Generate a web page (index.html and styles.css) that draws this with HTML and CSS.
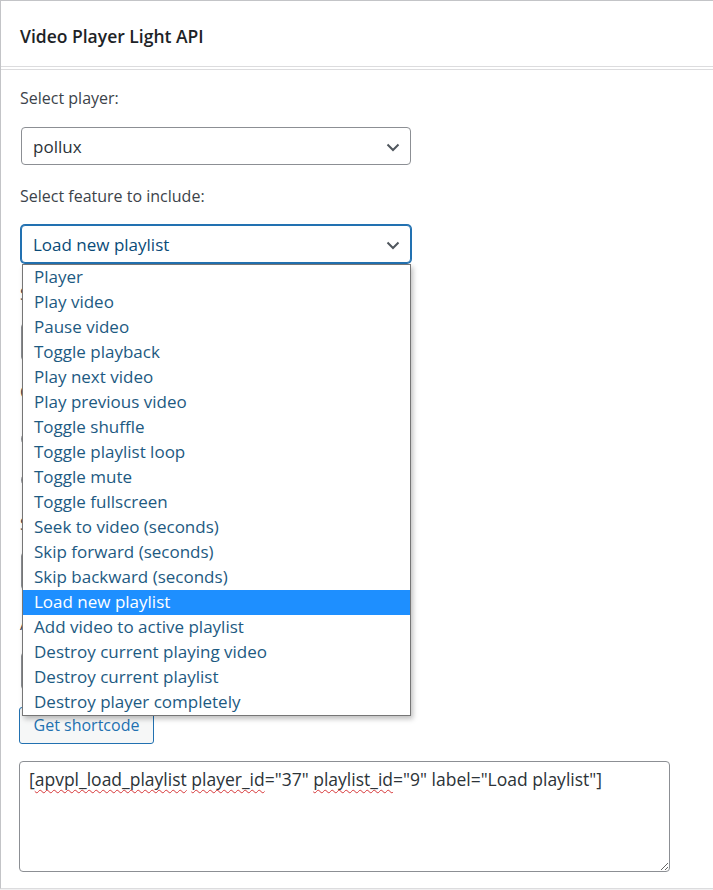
FILE: index.html
```html
<!DOCTYPE html>
<html>
<head>
<meta charset="utf-8">
<link rel="stylesheet" href="styles.css">
</head>
<body>
<div class="postbox">
  <div class="postbox-header"><h2 class="title">Video Player Light API</h2></div>
  <div class="inside">
    <label class="lbl lbl-first">Select player:</label>
    <div class="select">
      <span class="select-text">pollux</span>
      <svg class="chev" width="14" height="9" viewBox="0 0 14 9"><path d="M1.5 1.5 L7 7 L12.5 1.5" fill="none" stroke="#50575e" stroke-width="2"/></svg>
    </div>
    <label class="lbl">Select feature to include:</label>
    <div class="select select-focus">
      <span class="select-text">Load new playlist</span>
      <svg class="chev" width="14" height="9" viewBox="0 0 14 9"><path d="M1.5 1.5 L7 7 L12.5 1.5" fill="none" stroke="#50575e" stroke-width="2"/></svg>
      <ul class="dropdown">
        <li>Player</li>
        <li>Play video</li>
        <li>Pause video</li>
        <li>Toggle playback</li>
        <li>Play next video</li>
        <li>Play previous video</li>
        <li>Toggle shuffle</li>
        <li>Toggle playlist loop</li>
        <li>Toggle mute</li>
        <li>Toggle fullscreen</li>
        <li>Seek to video (seconds)</li>
        <li>Skip forward (seconds)</li>
        <li>Skip backward (seconds)</li>
        <li class="active">Load new playlist</li>
        <li>Add video to active playlist</li>
        <li>Destroy current playing video</li>
        <li>Destroy current playlist</li>
        <li>Destroy player completely</li>
      </ul>
    </div>
    <label class="lbl">Select playlist:</label>
    <div class="select"><span class="select-text">Playlist</span></div>
    <label class="lbl">Choose display type:</label>
    <div class="radios">
      <div class="radio-row"><span class="radio"></span><span class="radio-text">Button</span></div>
      <div class="radio-row"><span class="radio"></span><span class="radio-text">Link</span></div>
    </div>
    <label class="lbl lbl-radio">Set label:</label>
    <div class="input"></div>
    <label class="lbl lbl-wide">Add class name:</label>
    <div class="input"></div>
    <button class="button">Get shortcode</button>
    <div class="textarea">[<span class="wavy">apvpl_load_playlist</span> <span class="wavy">player_id</span>="37" <span class="wavy">playlist_id</span>="9" label="Load playlist"]</div>
  </div>
</div>
</body>
</html>
```
FILE: styles.css
```css
* { box-sizing: border-box; }
html, body { margin: 0; padding: 0; }
body {
  background: #f0f0f1;
  font-family: "Open Sans", "Noto Sans", sans-serif;
  width: 713px;
  height: 890px;
  overflow: hidden;
}
.postbox {
  background: #fff;
  border-left: 1px solid #c3c4c7;
  border-top: 1px solid #c3c4c7;
  border-bottom: 1px solid #dcdcde;
  width: 720px;
  height: 889px;
}
.postbox-header {
  height: 66px;
  border-bottom: 1px solid #dcdcde;
  display: flex;
  align-items: center;
  padding-left: 19px;
}
.title {
  margin: 0;
  font-size: 17.5px;
  font-weight: 600;
  color: #1d2327;
  padding-top: 4px;
}
.inside {
  margin-top: 2px;
  border-top: 1px solid #dcdcde;
  padding: 18px 0 0 19px;
  display: flex;
  flex-direction: column;
  align-items: flex-start;
}
.lbl {
  display: block;
  height: 20px;
  line-height: 20px;
  font-size: 16px;
  color: #3c434a;
  margin-top: 21px;
  margin-bottom: 19px;
}
.lbl-first { margin-top: 0; }
.lbl-radio { margin-top: 26px; margin-bottom: 18px; }
.lbl-wide { margin-top: 24px; margin-bottom: 18px; }
.select {
  position: relative;
  margin-left: 1px;
  width: 390px;
  height: 38px;
  border: 1px solid #8c8f94;
  border-radius: 4px;
  background: #fff;
  display: flex;
  align-items: center;
  padding-left: 11px;
}
.select-text {
  font-size: 17px;
  color: #2c3338;
}
.select-focus {
  border-color: #2271b1;
  box-shadow: 0 0 0 1px #2271b1;
}
.select-focus .select-text { color: #0a4b78; }
.chev {
  position: absolute;
  right: 10px;
  top: 15px;
}
.dropdown {
  position: absolute;
  left: 0;
  top: 38px;
  width: 389px;
  margin: 0;
  padding: 0;
  list-style: none;
  background: #fff;
  border: 1px solid #767676;
  box-shadow: 2px 3px 5px rgba(0,0,0,0.25);
  z-index: 5;
}
.dropdown li {
  height: 25px;
  line-height: 23px;
  font-size: 17px;
  padding-left: 11px;
  color: #1d5a82;
}
.dropdown li.active {
  background: #1e8fff;
  color: #fff;
}
.radios {
  margin-left: 1px;
  display: flex;
  flex-direction: column;
  gap: 25px;
}
.lbl + .radios { margin-top: 10px; }
.radio-row { display: flex; align-items: center; gap: 8px; height: 16px; }
.radio {
  width: 16px;
  height: 16px;
  border: 1px solid #8c8f94;
  border-radius: 50%;
}
.radio-text { font-size: 16px; color: #3c434a; }
.input {
  margin-left: 1px;
  width: 390px;
  height: 38px;
  border: 1px solid #8c8f94;
  border-radius: 4px;
}
.button {
  margin-top: 17px;
  margin-left: -1px;
  width: 135px;
  height: 37px;
  border: 1px solid #2271b1;
  border-radius: 3px;
  background: #f6f7f7;
  color: #2271b1;
  font-family: "Open Sans", "Noto Sans", sans-serif;
  font-size: 16px;
  padding: 0 0 2px 0;
}
.textarea {
  margin-top: 17px;
  margin-left: -1px;
  width: 651px;
  height: 111px;
  border: 1px solid #8c8f94;
  border-radius: 4px;
  padding: 5px 9px;
  font-size: 17.5px;
  color: #2c3338;
  resize: both;
  overflow: hidden;
  line-height: 24px;
  white-space: nowrap;
}
.wavy {
  text-decoration: underline wavy #d63638;
  text-decoration-thickness: 1px;
  text-underline-offset: 3px;
  text-decoration-skip-ink: none;
}
```
